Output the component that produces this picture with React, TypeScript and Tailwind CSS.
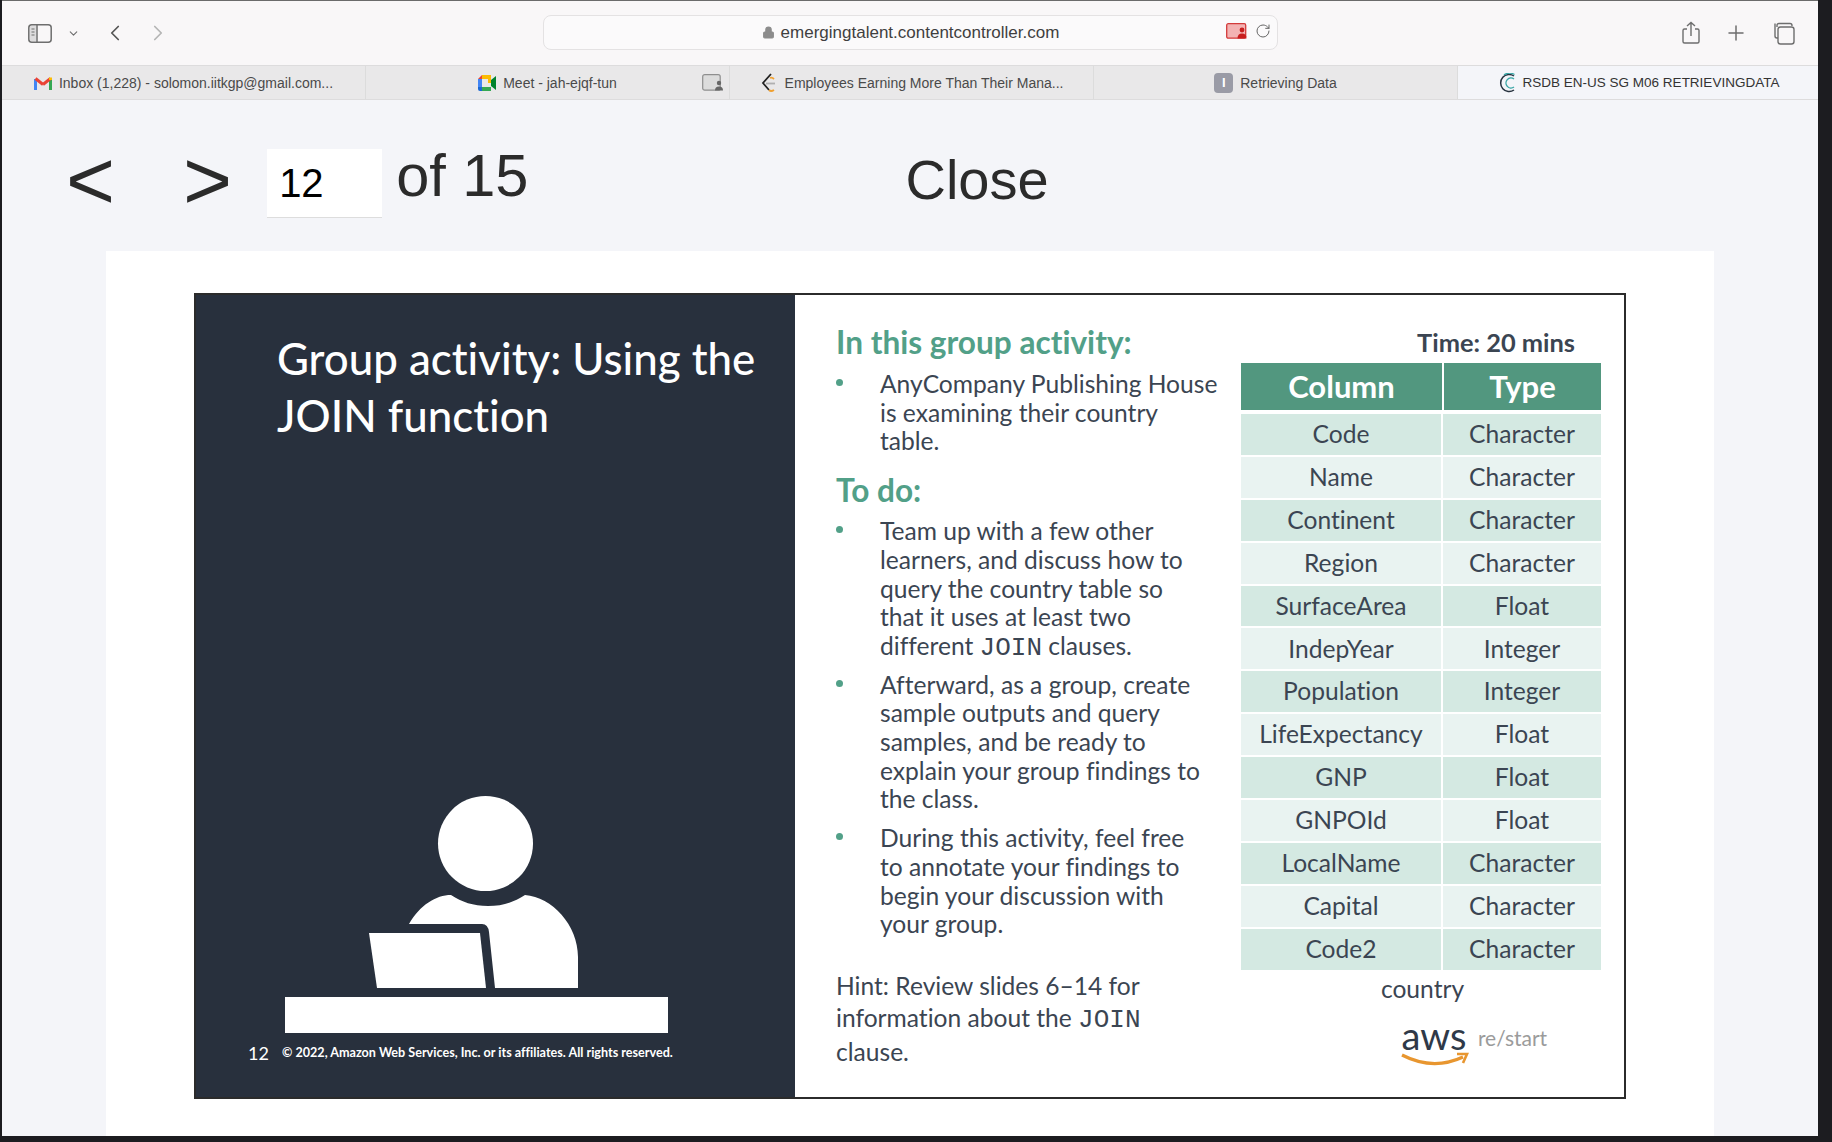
import { ChevronDown, ChevronLeft, ChevronRight, Lock, Plus, RotateCw } from "lucide-react";

const rows = [
  ["Code", "Character"],
  ["Name", "Character"],
  ["Continent", "Character"],
  ["Region", "Character"],
  ["SurfaceArea", "Float"],
  ["IndepYear", "Integer"],
  ["Population", "Integer"],
  ["LifeExpectancy", "Float"],
  ["GNP", "Float"],
  ["GNPOId", "Float"],
  ["LocalName", "Character"],
  ["Capital", "Character"],
  ["Code2", "Character"],
];

function GmailIcon() {
  return (
    <svg width="18" height="14" viewBox="0 0 18 14" fill="none">
      <path d="M1.5 14V3" stroke="#4285f4" strokeWidth="3" />
      <path d="M16.5 14V3" stroke="#34a853" strokeWidth="3" />
      <path d="M1.5 2.5L9 8.5" stroke="#ea4335" strokeWidth="3" />
      <path d="M9 8.5L16.5 2.5" stroke="#ea4335" strokeWidth="3" />
      <path d="M16.5 1.5L16.5 4" stroke="#fbbc04" strokeWidth="3" />
    </svg>
  );
}

function MeetIcon() {
  return (
    <svg width="18" height="16" viewBox="0 0 18 16">
      <path d="M4 0H13V4H4Z" fill="#fbbc04" />
      <path d="M0 4L4 0V4H0Z" fill="#ea4335" />
      <path d="M0 4H4V12H0Z" fill="#4285f4" />
      <path d="M0 12H4V16H2Q0 16 0 14Z" fill="#1967d2" />
      <path d="M4 12H13V16H4Z" fill="#34a853" />
      <path d="M13 5V11L18 15V1Z" fill="#00832d" />
      <path d="M13 0Q13 0 13 4V8H10V4H13Z" fill="#fbbc04" />
    </svg>
  );
}

function MeetBadge() {
  return (
    <svg width="22" height="17" viewBox="0 0 22 17" fill="none">
      <rect x="0.7" y="0.7" width="17.5" height="15.5" rx="2" fill="#dcdcdc" stroke="#8e8e8e" strokeWidth="1.2" />
      <circle cx="17" cy="9" r="2.2" fill="#666" />
      <path d="M13 16.5q0-4 4-4t4 4Z" fill="#666" />
    </svg>
  );
}

function LeetIcon() {
  return (
    <svg width="18" height="20" viewBox="0 0 18 20" fill="none">
      <path d="M11 1L3 10L9 17" stroke="#222" strokeWidth="1.8" />
      <path d="M9 17Q11 19 14 17" stroke="#f0a030" strokeWidth="1.8" />
      <path d="M6 10.5H15" stroke="#b0b0b0" strokeWidth="1.8" />
      <path d="M10 5Q12 4 14 6" stroke="#f0a030" strokeWidth="1.8" />
    </svg>
  );
}

function ControllerIcon() {
  return (
    <svg width="19" height="20" viewBox="0 0 19 20" fill="none">
      <path d="M17 3A8.5 8.5 0 1 0 17 17" stroke="#27323f" strokeWidth="1.5" />
      <path d="M17.5 1.5A10 10 0 0 0 7 2" stroke="#3aa6a6" strokeWidth="1.4" />
      <path d="M17 6A5 5 0 1 0 17 14" stroke="#3aa6a6" strokeWidth="1.4" />
    </svg>
  );
}

function SidebarIcon() {
  return (
    <svg width="24" height="19" viewBox="0 0 24 19" fill="none" stroke="#6e6e6e" strokeWidth="1.5">
      <rect x="0.8" y="0.8" width="22.4" height="17.4" rx="3" />
      <path d="M9 1V18" />
      <rect x="1.5" y="1.5" width="7.5" height="16" rx="2" fill="#8a8a8a" fillOpacity="0.25" stroke="none" />
      <path d="M3.5 5H6.5M3.5 8H6.5M3.5 11H6.5" strokeWidth="1.1" />
    </svg>
  );
}

function ShareIcon() {
  return (
    <svg width="20" height="24" viewBox="0 0 20 24" fill="none" stroke="#6e6e6e" strokeWidth="1.4">
      <path d="M6 8H3.5Q2 8 2 9.5V20.5Q2 22 3.5 22H16.5Q18 22 18 20.5V9.5Q18 8 16.5 8H14" />
      <path d="M10 15V1.5M6 5L10 1.5L14 5" />
    </svg>
  );
}

function TabsIcon() {
  return (
    <svg width="23" height="23" viewBox="0 0 23 23" fill="none" stroke="#6e6e6e" strokeWidth="1.4">
      <path d="M5 5V3.5Q5 1.5 7 1.5H18Q20 1.5 20 3.5V4" />
      <path d="M3 1.5V14Q3 16 5 16H6" />
      <rect x="6" y="5" width="16" height="17" rx="2.5" />
    </svg>
  );
}

function RedCamera() {
  return (
    <svg width="22" height="16" viewBox="0 0 22 16" fill="none">
      <rect x="0.7" y="0.7" width="19" height="14.5" rx="1.5" fill="#f3b3b3" stroke="#d33b3b" strokeWidth="1.3" />
      <circle cx="16" cy="7" r="2.4" fill="#c81e1e" />
      <path d="M11.5 15.5q0-5 4.5-5t4.5 5Z" fill="#c81e1e" />
    </svg>
  );
}

function PersonIcon() {
  return (
    <svg width="383" height="237" viewBox="285 796 383 237" fill="white">
      <ellipse cx="485.5" cy="843.5" rx="47.5" ry="47.5" />
      <path d="M409 924C420 905 436 895 451 895C462 902 473 906 488 906C503 906 514 902 525 895C552 897 578 925 578 957V988H495L489 932Q488 924 482 924Z" />
      <path d="M369 933H480L486 988H377Z" />
      <rect x="285" y="997" width="383" height="36" />
    </svg>
  );
}

function Tab({ icon, label, extra, active }: { icon: React.ReactNode; label: string; extra?: React.ReactNode; active?: boolean }) {
  return (
    <div className={"relative h-full flex items-center justify-center gap-[7px] pt-px " + (active ? "w-[360px] shrink-0 bg-[#f4f5f9] text-[13.5px] text-[#333]" : "flex-1 text-[14px] text-[#4a4a4a] border-r border-[#dcdcdc]")}>
      {icon}
      <span className="whitespace-nowrap">{label}</span>
      {extra && <div className="absolute right-[5px] top-[8px]">{extra}</div>}
    </div>
  );
}

function Join() {
  return <span className="font-['Liberation_Mono',monospace] text-[26px]">JOIN</span>;
}

function Bullet({ children, className }: { children: React.ReactNode; className?: string }) {
  return (
    <div className={"flex " + (className ?? "")}>
      <div className="w-[44px] shrink-0 pt-[9px]">
        <div className="w-[7px] h-[7px] rounded-full bg-[#52a088]" />
      </div>
      <p className="whitespace-nowrap">{children}</p>
    </div>
  );
}

export default function App() {
  return (
    <div className="w-full h-[1142px] bg-[#1c1c20] overflow-hidden font-['Liberation_Sans',sans-serif]">
      <div className="ml-[2px] mr-[14px] h-[1136px] border-t border-[#6b6b6b] bg-[#f4f5f9] flex flex-col">
        {/* toolbar */}
        <div className="h-[64px] shrink-0 bg-[#f9f7f8] flex items-center relative">
          <div className="ml-[26px] flex items-center">
            <SidebarIcon />
            <ChevronDown size={13} strokeWidth={2} className="ml-[15px] text-[#6e6e6e]" />
            <ChevronLeft size={26} strokeWidth={1.6} className="ml-[22px] text-[#555]" />
            <ChevronRight size={26} strokeWidth={1.6} className="ml-[17px] text-[#b5b5b5]" />
          </div>
          <div className="absolute left-[541px] top-[14px] w-[735px] h-[35px] rounded-[8px] border border-[#e4e2e3] bg-[#fbfafb] flex items-center justify-center text-[17px] text-[#3f3f3f]">
            <Lock size={13} fill="#8c8c8c" strokeWidth={2} className="text-[#8c8c8c] mr-[6px]" />
            emergingtalent.contentcontroller.com
            <div className="absolute right-[6px] top-[7px] flex items-center gap-[7px]">
              <RedCamera />
              <RotateCw size={16} strokeWidth={1.5} className="text-[#666]" />
            </div>
          </div>
          <div className="ml-auto mr-[23px] flex items-center">
            <ShareIcon />
            <Plus size={24} strokeWidth={1.5} className="ml-[23px] text-[#6e6e6e]" />
            <div className="ml-[24px]">
              <TabsIcon />
            </div>
          </div>
        </div>

        {/* tabs */}
        <div className="h-[35px] shrink-0 flex bg-[#e9e8e9] border-t border-b border-[#dddcdd]">
          <Tab icon={<GmailIcon />} label="Inbox (1,228) - solomon.iitkgp@gmail.com..." />
          <Tab icon={<MeetIcon />} label="Meet - jah-ejqf-tun" extra={<MeetBadge />} />
          <Tab icon={<LeetIcon />} label="Employees Earning More Than Their Mana..." />
          <Tab icon={<div className="w-[19px] h-[20px] rounded-[4px] bg-[#9a9ba6] text-white text-[13px] font-bold flex items-center justify-center">I</div>} label="Retrieving Data" />
          <Tab active icon={<ControllerIcon />} label="RSDB EN-US SG M06 RETRIEVINGDATA" />
        </div>

        {/* page controls */}
        <div className="h-[151px] shrink-0 flex items-center pl-[64px] pt-[16px] text-[#2b2b2b]">
          <span className="text-[84px] leading-none -mt-[8px]">&lt;</span>
          <span className="text-[84px] leading-none ml-[68px] -mt-[8px]">&gt;</span>
          <div className="ml-[35px] w-[115px] h-[69px] bg-white border-b border-[#dddddd] flex items-center pl-[12px] text-[40px] text-black">12</div>
          <span className="ml-[14px] text-[59.5px] leading-none -mt-[15px]">of 15</span>
          <span className="ml-[377px] text-[56px] leading-none -mt-[8px]">Close</span>
        </div>

        {/* slide sheet */}
        <div className="flex-1 ml-[104px] mr-[104px] bg-white pt-[42px] pl-[88px] pr-[88px]">
          <div className="h-[806px] border-2 border-[#2b2b2b] flex font-['Lato',sans-serif] [font-variant-ligatures:none]">
            <div className="w-[599px] shrink-0 bg-[#28303d] text-white flex flex-col">
              <h1 className="pl-[81px] pt-[35px] text-[43.8px] leading-[57px] font-medium whitespace-nowrap">
                Group activity: Using the
                <br />
                JOIN function
              </h1>
              <div className="mt-auto pl-[89px]">
                <PersonIcon />
              </div>
              <div className="flex items-center pl-[52px] pt-[9px] pb-[33px]">
                <span className="w-[34px] text-[18px] leading-[22px]">12</span>
                <span className="text-[12.6px] font-bold whitespace-nowrap">© 2022, Amazon Web Services, Inc. or its affiliates. All rights reserved.</span>
              </div>
            </div>

            <div className="flex-1 flex text-[#3b4552] text-[24.6px] leading-[28.7px]">
              <div className="w-[446px] shrink-0 pl-[41px] pt-[30px]">
                <h2 className="text-[31.6px] leading-[34px] font-bold text-[#52a088]">In this group activity:</h2>
                <Bullet className="mt-[11px]">
                  AnyCompany Publishing House
                  <br />
                  is examining their country
                  <br />
                  table.
                </Bullet>
                <h2 className="mt-[17px] text-[31.6px] leading-[34px] font-bold text-[#52a088]">To do:</h2>
                <Bullet className="mt-[10px]">
                  Team up with a few other
                  <br />
                  learners, and discuss how to
                  <br />
                  query the country table so
                  <br />
                  that it uses at least two
                  <br />
                  different <Join /> clauses.
                </Bullet>
                <Bullet className="mt-[8px]">
                  Afterward, as a group, create
                  <br />
                  sample outputs and query
                  <br />
                  samples, and be ready to
                  <br />
                  explain your group findings to
                  <br />
                  the class.
                </Bullet>
                <Bullet className="mt-[10px]">
                  During this activity, feel free
                  <br />
                  to annotate your findings to
                  <br />
                  begin your discussion with
                  <br />
                  your group.
                </Bullet>
                <p className="mt-[31px] leading-[32px] whitespace-nowrap">
                  Hint: Review slides 6–14 for
                  <br />
                  information about the <Join />
                  <br />
                  clause.
                </p>
              </div>

              <div className="w-[360px] shrink-0 pt-[30px]">
                <div className="h-[38px] text-right pr-[26px] font-bold text-[25.4px] leading-[34px]">Time: 20 mins</div>
                <div className="grid grid-cols-[202px_158px] bg-white">
                  <div className="h-[47px] mr-[1px] bg-[#52977f] text-white font-bold text-[31px] flex items-center justify-center">Column</div>
                  <div className="h-[47px] ml-[1px] bg-[#52977f] text-white font-bold text-[31px] flex items-center justify-center">Type</div>
                </div>
                <div className="mt-[4px] flex flex-col">
                  {rows.map((r, i) => (
                    <div key={r[0]} className={"h-[42.9px] grid grid-cols-[202px_158px] border-b-2 border-white " + (i % 2 === 0 ? "bg-[#d4e9e2]" : "bg-[#e9f3f1]")}>
                      <div className="flex items-center justify-center border-r-2 border-white">{r[0]}</div>
                      <div className="flex items-center justify-center">{r[1]}</div>
                    </div>
                  ))}
                </div>
                <div className="text-center mt-[3px] pl-[3px]">country</div>
                <div className="mt-[16px] flex justify-center pl-[106px]">
                  <div className="relative w-[66px] h-[42px] shrink-0">
                    <span className="block text-center text-[38px] leading-[32px] text-[#2f3948]">aws</span>
                    <svg width="68" height="16" viewBox="0 0 68 16" fill="none" className="absolute left-0 top-[33px]">
                      <path d="M1 3Q32 19 62 5" stroke="#e8962f" strokeWidth="3.2" />
                      <path d="M56 2L66 2L62 11" stroke="#e8962f" strokeWidth="2.6" />
                    </svg>
                  </div>
                  <span className="ml-[11px] mt-[5px] text-[#9b9b9b] text-[21px] leading-[28px]">re/start</span>
                </div>
              </div>
            </div>
          </div>
        </div>
      </div>
    </div>
  );
}
